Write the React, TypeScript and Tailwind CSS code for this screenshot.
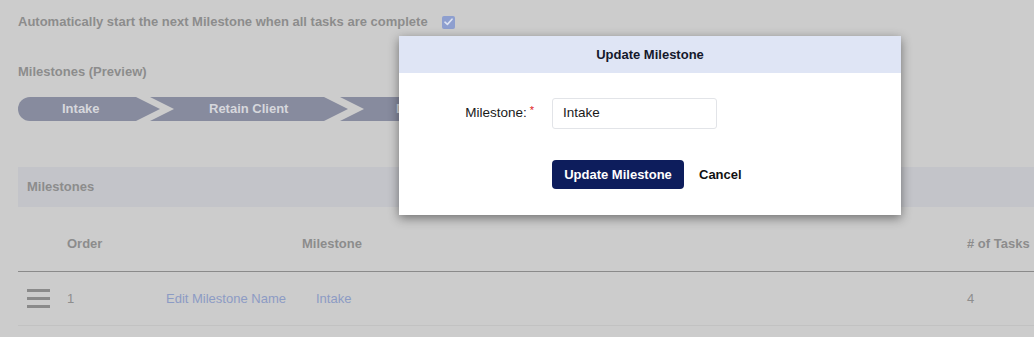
import React from "react";

const font = { fontFamily: '"Liberation Sans", Arial, Helvetica, sans-serif' };

function Chevrons() {
  return (
    <div className="flex h-[24px] items-stretch">
      <div className="w-[142px] rounded-l-full bg-[#878b9e] [clip-path:polygon(0_0,118px_0,142px_50%,118px_100%,0_100%)] flex items-center pl-[44px] text-[13px] font-bold text-[#d6d7dc]">
        Intake
      </div>
      <div className="-ml-[10px] w-[198px] bg-[#878b9e] [clip-path:polygon(0_0,174px_0,198px_50%,174px_100%,0_100%,24px_50%)] flex items-center pl-[59px] text-[13px] font-bold text-[#d6d7dc]">
        Retain Client
      </div>
      <div className="-ml-[8px] w-[140px] whitespace-nowrap bg-[#878b9e] [clip-path:polygon(0_0,116px_0,140px_50%,116px_100%,0_100%,24px_50%)] flex items-center pl-[56px] text-[13px] font-bold text-[#d6d7dc]">
        Discovery
      </div>
    </div>
  );
}

export default function App() {
  return (
    <div className="relative w-[1034px] h-[337px] overflow-hidden bg-[#cccccc]" style={font}>
      <div className="pl-[18px] pt-[14px]">
        <div className="flex items-center h-[16px] text-[13px] font-bold text-[#8c8c8c]">
          <span>Automatically start the next Milestone when all tasks are complete</span>
          <span className="ml-[14px] w-[13px] h-[13px] rounded-[2px] bg-[#8e9fcf] flex items-center justify-center">
            <svg width="9" height="8" viewBox="0 0 9 8" fill="none">
              <path d="M1 4.2 L3.4 6.4 L8 1.2" stroke="#dde3f2" strokeWidth="1.6" strokeLinecap="round" strokeLinejoin="round" />
            </svg>
          </span>
        </div>
        <div className="mt-[34px] h-[16px] flex items-center text-[13px] font-bold text-[#8c8c8c]">
          Milestones (Preview)
        </div>
        <div className="mt-[17px]">
          <Chevrons />
        </div>
        <div className="mt-[46px] h-[40px] bg-[#c3c4c9] flex items-center pl-[9px] text-[13px] font-bold text-[#8c8c8c]">
          Milestones
        </div>
        <div className="grid grid-cols-[49px_235px_665px_1fr] h-[65px] items-center border-b border-[#8a8a8a] text-[13px] font-bold text-[#8c8c8c] pt-[9px]">
          <span />
          <span>Order</span>
          <span>Milestone</span>
          <span className="whitespace-nowrap">
            # of Tasks
          </span>
        </div>
        <div className="grid grid-cols-[49px_99px_150px_651px_1fr] h-[54px] items-center border-b border-[#c2c2c2] text-[13px] text-[#8e8e8e]">
          <span className="pl-[9px] flex flex-col gap-[5px]">
            <span className="block w-[23px] h-[3px] bg-[#8a8a8a]" />
            <span className="block w-[23px] h-[3px] bg-[#8a8a8a]" />
            <span className="block w-[23px] h-[3px] bg-[#8a8a8a]" />
          </span>
          <span>1</span>
          <span className="text-[#8c9bc4]">Edit Milestone Name</span>
          <span className="text-[#8c9bc4]">Intake</span>
          <span>4</span>
        </div>
      </div>

      <div className="absolute left-[399px] top-[36px] w-[502px] h-[179px] bg-white shadow-[0_3px_10px_rgba(0,0,0,0.45)]">
        <div className="h-[37px] bg-[#dfe5f5] flex items-center justify-center text-[13px] font-bold text-[#14182b]">
          Update Milestone
        </div>
        <div className="flex items-center mt-[25px] h-[31px]">
          <div className="w-[135px] flex justify-end items-center">
            <span className="text-[13.5px] text-[#1a1a1a]">Milestone:</span>
            <span className="ml-[3px] text-[11px] leading-[11px] -translate-y-[3px] text-[#e02020]">*</span>
          </div>
          <div className="ml-[18px] w-[165px] h-[31px] border border-[#e2e4e8] rounded-[3px] flex items-center pl-[10px] text-[13.5px] text-[#1a1a1a]">
            Intake
          </div>
        </div>
        <div className="flex items-center mt-[31px] pl-[153px]">
          <div className="w-[132px] h-[29px] rounded-[4px] bg-[#0d1d5c] text-white text-[13px] font-bold flex items-center justify-center">
            Update Milestone
          </div>
          <div className="ml-[15px] text-[13px] font-bold text-[#111]">Cancel</div>
        </div>
      </div>
    </div>
  );
}
